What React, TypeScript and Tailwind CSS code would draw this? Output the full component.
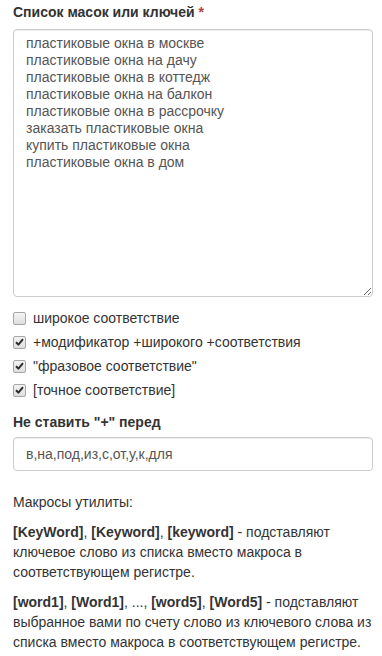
import React from "react";

const lines = [
  "пластиковые окна в москве",
  "пластиковые окна на дачу",
  "пластиковые окна в коттедж",
  "пластиковые окна на балкон",
  "пластиковые окна в рассрочку",
  "заказать пластиковые окна",
  "купить пластиковые окна",
  "пластиковые окна в дом",
];

function Box({ checked }: { checked: boolean }) {
  return (
    <span className="relative flex h-[13px] w-[13px] shrink-0 items-center justify-center rounded-[2px] border border-[#a6a6a6] bg-gradient-to-b from-[#f4f4f4] to-[#dedede]">
      {checked && (
        <svg width="9" height="8" viewBox="0 0 9 8">
          <path d="M1 4.2 L3.4 6.6 L8 1.2" fill="none" stroke="#2b2b2b" strokeWidth="2" strokeLinejoin="round" />
        </svg>
      )}
    </span>
  );
}

function Row({ checked, text }: { checked: boolean; text: string }) {
  return (
    <div className="flex h-5 items-center gap-[7px] leading-5">
      <Box checked={checked} />
      <span>{text}</span>
    </div>
  );
}

export default function App() {
  return (
    <div className="min-h-[656px] bg-white pl-[13px] pr-[9px] font-['Liberation_Sans',Arial,sans-serif] text-[14px] text-[#333]">
      <div className="pt-[2px] font-bold leading-5">
        Список масок или ключей <span className="text-[#a94442]">*</span>
      </div>
      <textarea
        className="mt-[7px] block h-[268px] w-[360px] rounded-[4px] border border-[#ccc] px-3 pt-[5px] text-[14px] leading-[17px] text-[#555] shadow-[inset_0_1px_1px_rgba(0,0,0,0.075)] outline-none font-['Liberation_Sans',Arial,sans-serif]"
        defaultValue={lines.join("\n")}
      />
      <div className="mt-[11px] flex flex-col gap-[4px]">
        <Row checked={false} text="широкое соответствие" />
        <Row checked={true} text="+модификатор +широкого +соответствия" />
        <Row checked={true} text={'"фразовое соответствие"'} />
        <Row checked={true} text="[точное соответствие]" />
      </div>
      <div className="mt-[12px] font-bold leading-5">Не ставить "+" перед</div>
      <input
        className="mt-[5px] block h-[34px] w-[360px] rounded-[4px] border border-[#ccc] px-3 text-[14px] text-[#555] shadow-[inset_0_1px_1px_rgba(0,0,0,0.075)] outline-none font-['Liberation_Sans',Arial,sans-serif]"
        defaultValue="в,на,под,из,с,от,у,к,для"
      />
      <p className="mt-[21px] leading-5">Макросы утилиты:</p>
      <p className="mt-[10px] w-[360px] leading-5">
        <b>[KeyWord]</b>, <b>[Keyword]</b>, <b>[keyword]</b> - подставляют ключевое слово из списка вместо макроса в соответствующем регистре.
      </p>
      <p className="mt-[10px] w-[360px] leading-5">
        <b>[word1]</b>, <b>[Word1]</b>, ..., <b>[word5]</b>, <b>[Word5]</b> - подставляют выбранное вами по счету слово из ключевого слова из списка вместо макроса в соответствующем регистре.
      </p>
    </div>
  );
}
